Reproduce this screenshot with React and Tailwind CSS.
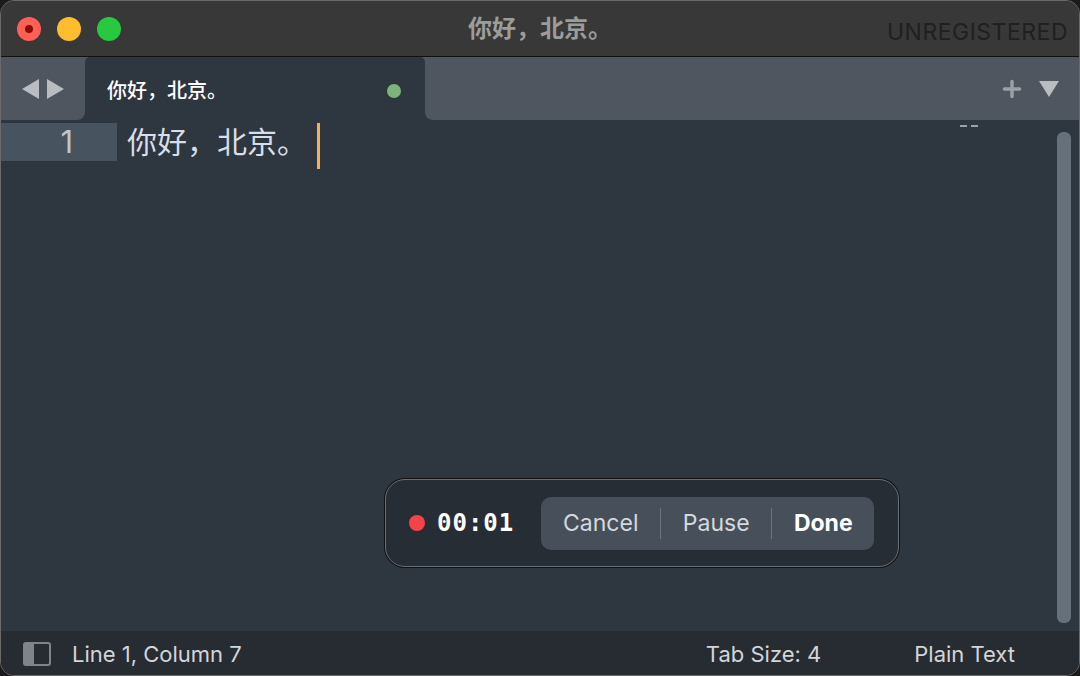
import { Plus } from "lucide-react";

const cjk = { fontFamily: 'Inter, "Noto Sans CJK SC", sans-serif' };
const mono = { fontFamily: '"DejaVu Sans Mono", "Liberation Mono", monospace' };

function TrafficLights() {
  return (
    <div className="flex items-center gap-[16px] pl-[16px]">
      <div className="w-[24px] h-[24px] rounded-full bg-[#ff5f57] flex items-center justify-center">
        <div className="w-[8px] h-[8px] rounded-full bg-[#8a0a04]" />
      </div>
      <div className="w-[24px] h-[24px] rounded-full bg-[#febc2e]" />
      <div className="w-[24px] h-[24px] rounded-full bg-[#28c840]" />
    </div>
  );
}

function RecordingBar() {
  return (
    <div className="absolute left-[384px] top-[478px] w-[514px] h-[88px] rounded-[20px] border border-[#6a7078] bg-[#272d35] shadow-[0_0_0_1px_#111] flex items-center pl-[23px]">
      <div className="w-[16px] h-[16px] rounded-full bg-[#f5434a]" />
      <span className="ml-[12px] text-[24px] font-bold text-white tracking-[1px]" style={mono}>
        00:01
      </span>
      <div className="ml-[27px] h-[53px] w-[333px] rounded-[10px] bg-[#47505a] flex items-center text-[23px]">
        <span className="w-[119px] text-center text-[#d5d8dc]">Cancel</span>
        <div className="w-px h-[31px] bg-[#6c747d]" />
        <span className="w-[110px] text-center text-[#d5d8dc]">Pause</span>
        <div className="w-px h-[31px] bg-[#6c747d]" />
        <span className="flex-1 text-center font-bold text-white">Done</span>
      </div>
    </div>
  );
}

export default function App() {
  return (
    <div className="w-[1080px] h-[676px] bg-[#1b1b1b] overflow-hidden" style={cjk}>
      <div className="relative w-full h-full rounded-[14px] border border-[#6a6a6a] overflow-hidden flex flex-col bg-[#2e3640]">
        {/* title bar */}
        <div className="h-[56px] shrink-0 bg-[#373837] border-b border-[#111] flex items-center relative">
          <TrafficLights />
          <div className="absolute inset-0 flex items-center justify-center text-[24px] font-bold text-[#9c9c9c]">
            你好，北京。
          </div>
          <div className="ml-auto pr-[11px] pt-[8px] text-[23px] text-[#1f2020] tracking-[0.5px]">UNREGISTERED</div>
        </div>

        {/* tab bar */}
        <div className="h-[63px] shrink-0 flex bg-[#2e3640]">
          <div className="w-[84px] bg-[#4f5660] rounded-br-[8px] flex items-center justify-center gap-[8px] text-[#b9bcc1]">
            <svg width="17" height="20" viewBox="0 0 17 20"><path d="M17 0 L0 10 L17 20 Z" fill="currentColor" /></svg>
            <svg width="17" height="20" viewBox="0 0 17 20"><path d="M0 0 L17 10 L0 20 Z" fill="currentColor" /></svg>
          </div>
          <div className="w-[340px] flex flex-col">
            <div className="h-[5px] bg-[#4f5660]">
              <div className="h-full bg-[#2e3640] rounded-t-[8px]" />
            </div>
            <div className="flex-1 flex items-center pl-[22px] pr-[24px]">
              <span className="text-[20px] font-medium text-white">你好，北京。</span>
              <div className="ml-auto w-[14px] h-[14px] rounded-full bg-[#7fb37c]" />
            </div>
          </div>
          <div className="flex-1 bg-[#4f5660] rounded-bl-[8px] flex items-center justify-end pr-[20px] gap-[14px] text-[#b9bcc1]">
            <Plus size={26} strokeWidth={3.2} className="text-[#9ba0a7]" />
            <svg width="20" height="18" viewBox="0 0 20 18"><path d="M0 1 L20 1 L10 17 Z" fill="currentColor" /></svg>
          </div>
        </div>

        {/* editor */}
        <div className="flex-1 flex relative">
          <div className="flex-1 pt-[3px]">
            <div className="flex items-stretch h-[38px]">
              <div className="w-[116px] bg-[#47535f] flex items-center justify-end pr-[44px] text-[31px] text-[#c0c5ce]">1</div>
              <div className="flex items-center pl-[10px] text-[30px] text-[#d8dee9] leading-none">
                你好，北京。
                <div className="ml-[10px] w-[3px] h-[46px] bg-[#f9ae58] self-start" />
              </div>
            </div>
          </div>
          <div className="absolute left-[959px] top-[5px] flex gap-[4px]">
            <div className="w-[7px] h-[2px] bg-[#9aa3ad]" />
            <div className="w-[7px] h-[2px] bg-[#9aa3ad]" />
          </div>
          <div className="w-[22px] pt-[12px] pb-[8px] pr-[7px]">
            <div className="w-[14px] h-full rounded-[6px] bg-[#65707a]" />
          </div>
        </div>

        {/* status bar */}
        <div className="h-[44px] shrink-0 bg-[#272c33] flex items-center text-[22px] text-[#d3d5d8] pt-[2px]">
          <div className="ml-[22px] w-[28px] h-[24px] rounded-[3px] border-2 border-[#808489] flex">
            <div className="w-[9px] h-full bg-[#808489]" />
          </div>
          <span className="ml-[21px]">Line 1, Column 7</span>
          <span className="ml-auto">Tab Size: 4</span>
          <span className="ml-[93px] mr-[64px]">Plain Text</span>
        </div>

        <RecordingBar />
      </div>
    </div>
  );
}
